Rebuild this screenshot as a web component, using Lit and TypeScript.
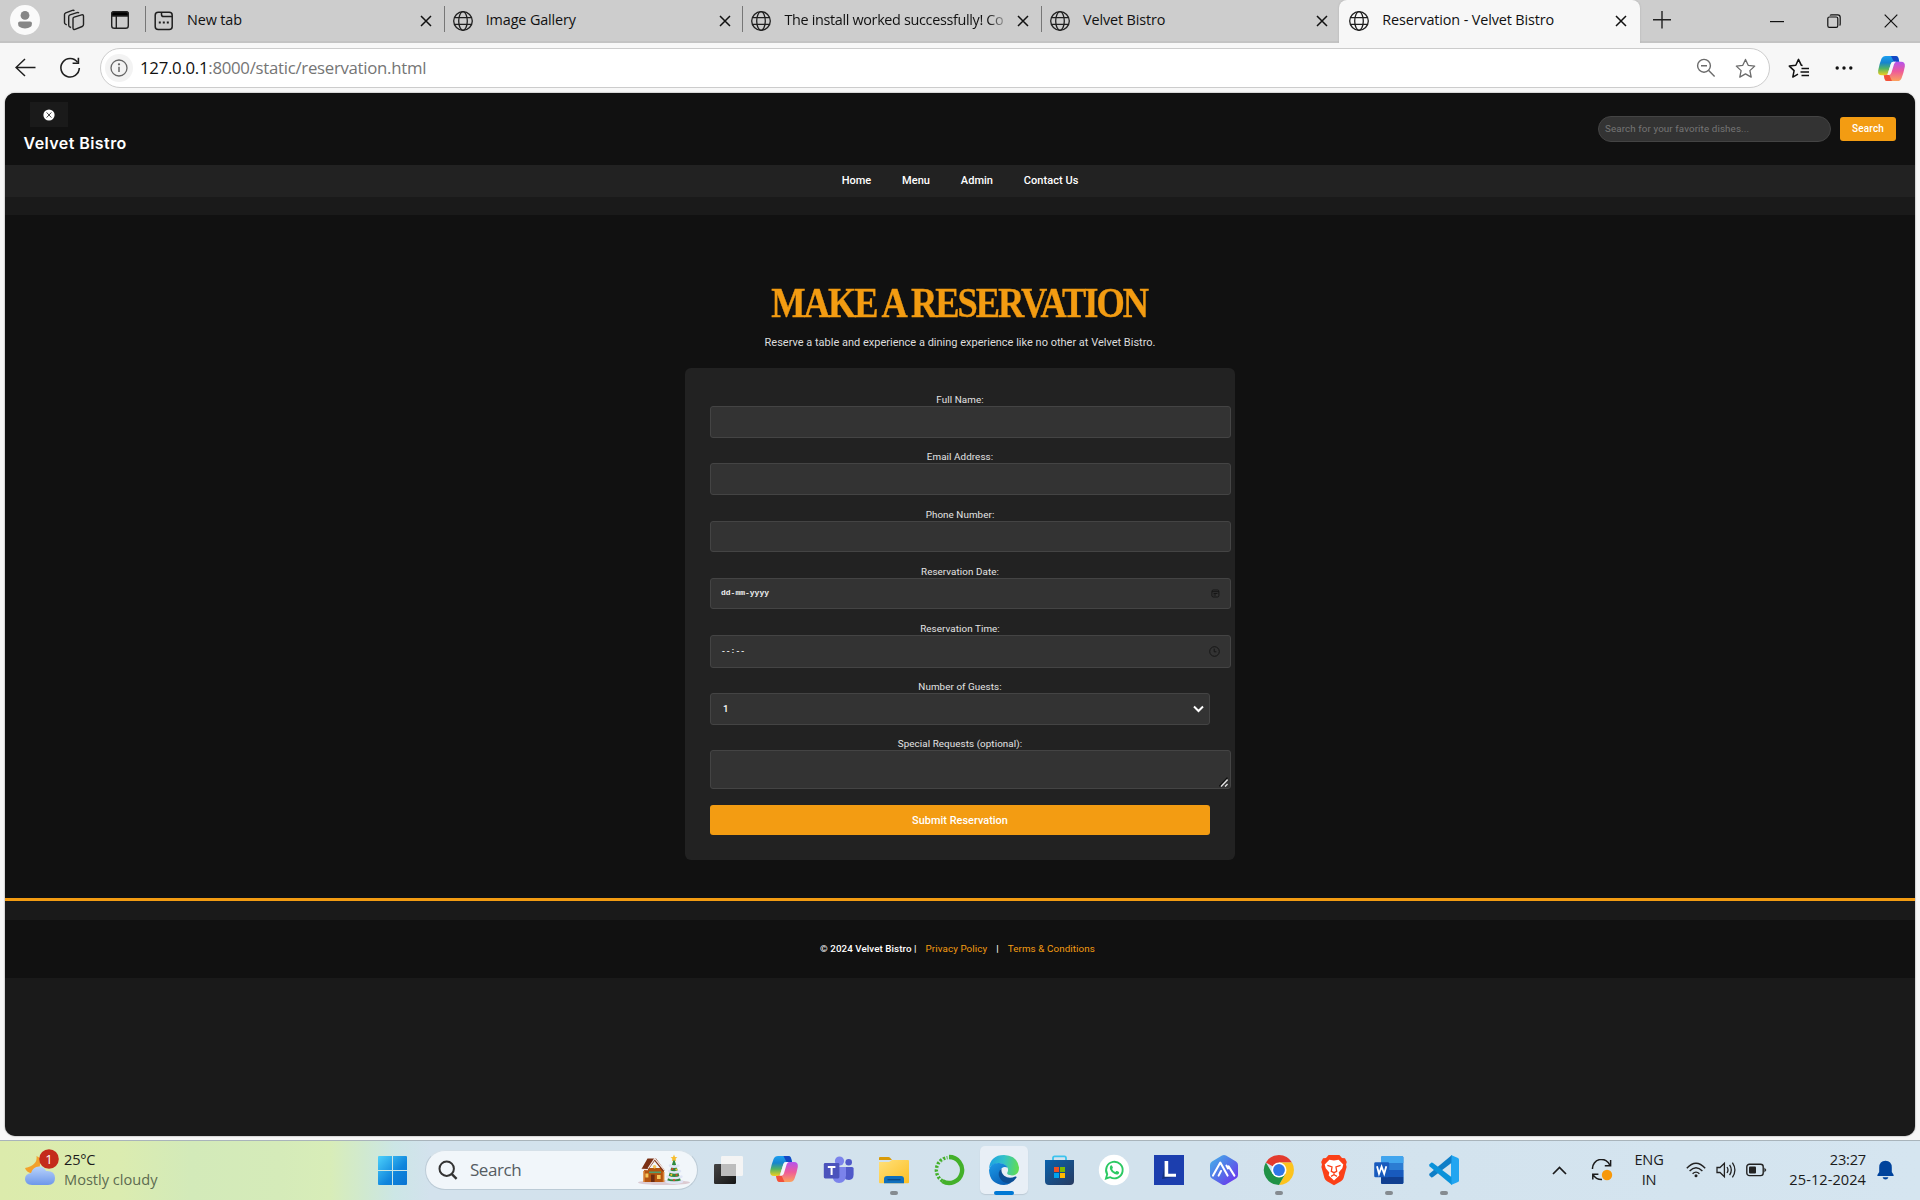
import { LitElement, html, svg, css, nothing } from "lit";
import { customElement } from "lit/decorators.js";

const uiFont = css`"Open Sans", "Noto Sans", sans-serif`;

const globe = html`<svg class="ico" width="22" height="22" viewBox="0 0 22 22" fill="none" stroke="#1f1f1f" stroke-width="1.3">
  <circle cx="11" cy="11" r="9.3"/><ellipse cx="11" cy="11" rx="4.3" ry="9.3"/><path d="M2.4 7.6H19.6M2.4 14.4H19.6"/></svg>`;

const newTabIcon = html`<svg class="ico" width="22" height="22" viewBox="0 0 22 22" fill="none" stroke="#1f1f1f" stroke-width="1.5">
  <rect x="2.2" y="2.2" width="17" height="17.4" rx="3"/><path d="M8.5 2.5V4.4Q8.5 6.6 10.7 6.6H19"/>
  <path d="M5.8 12.4h2M9.8 12.4h2M13.8 12.4h2" stroke-width="2"/></svg>`;

const closeIcon = html`<svg class="close" width="12" height="12" viewBox="0 0 12 12" stroke="#111" stroke-width="1.5"><path d="M1 1L11 11M11 1L1 11"/></svg>`;

const copilot = (id: string, w: number) => html`<svg width="${w}" height="${w}" viewBox="0 0 30 30">
  <defs>
    <linearGradient id="${id}a" x1="0" y1="0" x2="0" y2="1"><stop offset="0" stop-color="#1c9ff0"/><stop offset=".35" stop-color="#1684cf"/><stop offset=".65" stop-color="#52b264"/><stop offset="1" stop-color="#f2cf1d"/></linearGradient>
    <linearGradient id="${id}b" x1="0" y1="0" x2="0" y2="1"><stop offset="0" stop-color="#b453ee"/><stop offset=".5" stop-color="#ee5a9a"/><stop offset="1" stop-color="#fba35c"/></linearGradient>
  </defs>
  <path d="M12 2H19.5Q21.4 2 22 4L23 8H17Q15 8 14.4 10L11.3 20Q10.6 22 8.5 22H5Q.6 22 1.2 17Q2.4 10.5 4.6 5Q5.8 2 9 2Z" fill="url(#${id}a)"/>
  <path d="M14.5 2H19.5Q21.4 2 22 4L23 8H17.5Z" fill="#1347c4"/>
  <path d="M18 28H10.5Q8.6 28 8 26L7 22H8.5Q11 22 11.8 20L15 10Q15.8 8 18 8H25Q29.4 8 28.8 13Q27.6 19.5 25.4 25Q24.2 28 21 28Z" fill="url(#${id}b)"/>
  <path d="M15.5 28H10.5Q8.6 28 8 26L7 22H8.5Q11 22 11.8 20Z" fill="#f2503b"/>
  <path d="M17.6 10.5Q18.2 8.6 19.8 8H17Q15 8 14.4 10L11.3 20Q11 21.2 10.3 21.7H12.6Q14.3 21.4 14.9 19.5Z" fill="#f4f6fa"/>
</svg>`;

@customElement("browser-chrome")
export class BrowserChrome extends LitElement {
  static styles = css`
    :host { display: block; font-family: ${uiFont}; color: #111; }
    svg { display: block; flex: none; }
    .tabs { display: flex; height: 43px; background: #cdcdcd; box-shadow: inset 0 -2px 0 #c3c3c3; }
    .lead { display: flex; align-items: center; width: 145px; height: 40px; box-sizing: border-box; padding-left: 10px; }
    .avatar { width: 30px; height: 30px; margin-right: 23px; }
    .spaces { margin-right: 25px; }
    .tab { display: flex; align-items: center; box-sizing: border-box; width: 298.7px; height: 41px; padding-left: 7px; position: relative; font-size: 14.4px; letter-spacing: -.13px; }
    .tab::before { content: ""; width: 1px; height: 26px; background: #777; margin: 0 0 3px -7px; }
    .tab .ico { margin-left: 7px; }
    .title { width: 226px; margin-left: 12px; white-space: nowrap; line-height: 24px; height: 26px; }
    .title.fade { letter-spacing: -.33px; mask-image: linear-gradient(90deg, #000 204px, transparent 226px); }
    .close { margin-left: 7px; }
    .active { width: 300.5px; height: 43px; padding-bottom: 2px; background: #f7f7f7; border-radius: 8px 8px 0 0; box-shadow: 0 0 2px #aaa; margin-left: -.5px; clip-path: inset(0 -3px 0 -3px); }
    .active::before { visibility: hidden; }
    .active .ico { margin-left: 8px; }
    .plus { margin: 11px 0 0 13px; }
    .win { display: flex; align-items: center; height: 42px; margin-left: auto; gap: 43px; padding-right: 22px; }
    .bar { display: flex; align-items: center; height: 50px; background: #f7f7f7; }
    .back { margin-left: 15px; }
    .reload { margin-left: 23px; }
    .address { display: flex; align-items: center; box-sizing: border-box; width: 1670px; height: 40px; margin: 0 0 0 19px; background: #fff; border: 1.5px solid #ccc; border-radius: 20px; }
    .info { display: flex; align-items: center; justify-content: center; width: 28px; height: 28px; border-radius: 14px; background: #f3f3f3; margin-left: 4px; }
    .url { margin-left: 7px; font-size: 16.8px; letter-spacing: -.28px; line-height: 26px; color: #757575; white-space: nowrap; }
    .host { color: #111; }
    .zoom { margin-left: auto; }
    .star { margin: 0 13px 0 19px; }
    .fav { margin-left: 18px; }
    .dots { margin-left: 25px; }
    .pilot { margin-left: 24px; }
  `;

  private tabs = [
    { title: "New tab", icon: newTabIcon },
    { title: "Image Gallery", icon: globe },
    { title: "The install worked successfully! Co", icon: globe, fade: true },
    { title: "Velvet Bistro", icon: globe },
    { title: "Reservation - Velvet Bistro", icon: globe, active: true },
  ];

  render() {
    return html`
      <div class="tabs">
        <div class="lead">
          <svg class="avatar" viewBox="0 0 30 30"><circle cx="15" cy="15" r="15" fill="#fafafa"/><circle cx="15" cy="10.4" r="4.4" fill="#868686"/><path d="M8 18.6Q8 16.5 10 16.5H20Q22 16.5 22 18.6Q22 23.4 15 23.4Q8 23.4 8 18.6Z" fill="#868686"/></svg>
          <svg class="spaces" width="22" height="22" viewBox="0 0 22 22" fill="none" stroke="#222" stroke-width="1.4" stroke-linejoin="round">
            <path d="M10 9.8Q10 8.6 11.2 8.2L18.6 5.9Q20.4 5.5 20.5 7V15.6Q20.5 17 19.2 17.5L12 20.4Q10.2 20.9 10 19.2Z"/>
            <path d="M8 18.6L6.4 17.6Q5.7 17.1 5.7 16V7.8Q5.7 6.4 7 5.9L14 3.6Q15.4 3.3 15.9 4.2"/><path d="M3.7 16L2.3 15Q1.5 14.4 1.5 13.4V5.6Q1.5 4.3 2.7 3.8L9.4 1.4Q10.8 1 11.3 1.9"/></svg>
          <svg width="20" height="20" viewBox="0 0 20 20" fill="none" stroke="#222" stroke-width="1.4"><rect x="1.7" y="1.7" width="16.6" height="16.6" rx="2.6"/><path d="M1.7 6V4Q1.7 1.7 4 1.7H16Q18.3 1.7 18.3 4V6Z" fill="#000"/><path d="M6.3 6V18"/></svg>
        </div>
        ${this.tabs.map((t) => html`<div class="tab ${t.active ? "active" : ""}">${t.icon}<div class="title ${t.fade ? "fade" : ""}">${t.title}</div>${closeIcon}</div>`)}
        <svg class="plus" width="18" height="18" viewBox="0 0 18 18" stroke="#222" stroke-width="1.4"><path d="M9 0V17.5M0 8.7H18"/></svg>
        <div class="win">
          <svg width="14" height="14" viewBox="0 0 14 14" stroke="#111" stroke-width="1.2"><path d="M0 7.6H14"/></svg>
          <svg width="14" height="14" viewBox="0 0 14 14" fill="none" stroke="#111" stroke-width="1.2"><rect x=".8" y="3" width="10" height="10.3" rx="1.6"/><path d="M3 1.5Q3.5 .8 4.5 .8H10.7Q13.2 .8 13.2 3.4V10Q13.2 11 12.6 11.5"/></svg>
          <svg width="14" height="14" viewBox="0 0 14 14" stroke="#111" stroke-width="1.2"><path d="M.7 .7L13.3 13.3M13.3 .7L.7 13.3"/></svg>
        </div>
      </div>
      <div class="bar">
        <svg class="back" width="21" height="20" viewBox="0 0 21 20" fill="none" stroke="#1f1f1f" stroke-width="1.5"><path d="M20.5 9.5H1M10 1L1 9.5L10 18"/></svg>
        <svg class="reload" width="22" height="22" viewBox="0 0 22 22" fill="none" stroke="#1f1f1f" stroke-width="1.6"><path d="M18.6 5.4A9.2 9.2 0 1 0 20.3 11"/><path d="M19.4 .8V6.2H13.6"/></svg>
        <div class="address">
          <div class="info"><svg width="18" height="18" viewBox="0 0 18 18" fill="none" stroke="#666" stroke-width="1.3"><circle cx="9" cy="9" r="8"/><path d="M9 7.8V13" stroke-width="1.5"/><circle cx="9" cy="5.3" r=".5" fill="#666"/></svg></div>
          <div class="url"><span class="host">127.0.0.1</span>:8000/static/reservation.html</div>
          <svg class="zoom" width="20" height="20" viewBox="0 0 20 20" fill="none" stroke="#6b6b6b" stroke-width="1.4"><circle cx="8" cy="7.8" r="6.4"/><path d="M12.7 12.6L18.6 18.6M5 7.8H11"/></svg>
          <svg class="star" width="21" height="21" viewBox="0 0 21 21" fill="none" stroke="#6b6b6b" stroke-width="1.3" stroke-linejoin="round"><path d="M10.5 1.4L13.2 7.3L19.7 8.1L14.9 12.6L16.2 19.1L10.5 15.9L4.8 19.1L6.1 12.6L1.3 8.1L7.8 7.3Z"/></svg>
        </div>
        <svg class="fav" width="22" height="21" viewBox="0 0 22 21" fill="none" stroke="#111" stroke-width="1.5" stroke-linejoin="round"><path d="M14.6 7.6L13.4 7.3L10.5 1.4L7.8 7.3L1.3 8.1L6.1 12.6L4.8 19.1L10 16.2"/><path d="M13.5 10.6H21M12.5 14H21M13.5 17.4H21"/></svg>
        <svg class="dots" width="18" height="4" viewBox="0 0 18 4" fill="#111"><circle cx="2.2" cy="2" r="1.7"/><circle cx="9" cy="2" r="1.7"/><circle cx="15.8" cy="2" r="1.7"/></svg>
        <div class="pilot">${copilot("t", 29)}</div>
      </div>`;
  }
}

@customElement("bistro-page")
export class BistroPage extends LitElement {
  static styles = css`
    :host { display: block; height: 1043px; margin: 0 5px; background: #1a1a1a; border-radius: 10px; overflow: hidden; font-family: Roboto, sans-serif; color: #fff; box-shadow: 0 0 1.5px #555; }
    svg { display: block; flex: none; }
    .header { display: flex; justify-content: space-between; height: 72px; background: #111; padding: 0 19px 0 18.5px; }
    .thumb { display: flex; align-items: center; justify-content: center; width: 38px; height: 25px; margin: 9px 0 0 6px; background: #1a1a1a; }
    .brand { font: 600 16px/20px Inter, sans-serif; letter-spacing: .43px; margin-top: 5.5px; white-space: nowrap; }
    .search { display: flex; align-items: center; }
    .query { box-sizing: border-box; width: 233px; height: 26px; border: 1px solid #444; border-radius: 13px; background: #333; color: #757575; font-size: 9.8px; letter-spacing: .11px; line-height: 23px; padding-left: 6px; }
    .go { width: 56px; height: 24px; margin-left: 9px; border-radius: 3px; background: #f39c12; font-size: 10px; letter-spacing: .15px; font-weight: 500; line-height: 23px; text-align: center; }
    .nav { display: flex; justify-content: center; gap: 30.8px; height: 32px; background: #222; font-size: 11px; letter-spacing: .04px; font-weight: 500; line-height: 31px; }
    .main { display: flex; flex-direction: column; align-items: center; box-sizing: border-box; height: 686px; margin-top: 18px; padding-top: 67px; background: #111; border-bottom: 3px solid #f39c12; }
    h1 { font: bold 41.5px/42px "Liberation Serif", serif; letter-spacing: -2.3px; color: #f39c12; margin: 0 2px 0 0; white-space: nowrap; transform: scaleX(.877); -webkit-text-stroke: .4px #f39c12; }
    .sub { margin-top: 11.6px; font-size: 11px; line-height: 14px; height: 13.4px; color: #ddd; white-space: nowrap; }
    .card { display: grid; grid-template-columns: 500px; grid-template-rows: 57px 58px 57px 57px 58px 57px 68px 30px; box-sizing: border-box; width: 550px; height: 492px; margin-top: 19px; padding: 25px; border-radius: 6px; background: #222; }
    .label { height: 13px; font-size: 9.8px; letter-spacing: .09px; line-height: 14px; text-align: center; color: #e4e4e4; }
    .input { display: flex; align-items: center; justify-content: space-between; box-sizing: border-box; width: 521px; height: 32px; padding: 0 10px; border: 1px solid #444; border-radius: 3px; background: #333; }
    .short { height: 31px; }
    .tall { height: 33px; }
    .area { height: 39px; align-items: flex-end; justify-content: flex-end; padding: 0 2px 1px; }
    .select { width: 500px; padding: 0 5px 0 12px; font-size: 9.6px; font-weight: 500; }
    .mono { font: bold 8px/12px "Liberation Mono", monospace; color: #eee; }
    .submit { height: 30px; border-radius: 3px; background: #f39c12; font-size: 10.9px; letter-spacing: .03px; font-weight: 500; line-height: 31px; text-align: center; }
    .footer { display: flex; align-items: center; height: 56px; padding-bottom: 2px; margin-top: 19px; padding-left: 815px; background: #111; font-size: 9.8px; letter-spacing: .06px; font-weight: 500; white-space: nowrap; }
    .link { color: #f39c12; margin: 0 9px; font-weight: 400; letter-spacing: .1px; }
  `;

  private field(label: string, cls = "", inner: unknown = nothing) {
    return html`<div><div class="label">${label}</div><div class="input ${cls}">${inner}</div></div>`;
  }

  render() {
    return html`
      <div class="header">
        <div><div class="thumb"><svg width="12" height="12" viewBox="0 0 12 12"><circle cx="6" cy="6" r="5.6" fill="#fff"/><path d="M3.6 3.4L8.4 8.6M8.4 3.4L3.6 8.6" stroke="#444" stroke-width="1"/></svg></div>
          <div class="brand">Velvet Bistro</div></div>
        <div class="search"><div class="query">Search for your favorite dishes...</div><div class="go">Search</div></div>
      </div>
      <div class="nav"><span>Home</span><span>Menu</span><span>Admin</span><span>Contact Us</span></div>
      <div class="main">
        <h1>MAKE A RESERVATION</h1>
        <div class="sub">Reserve a table and experience a dining experience like no other at Velvet Bistro.</div>
        <div class="card">
          ${this.field("Full Name:")}
          ${this.field("Email Address:")}
          ${this.field("Phone Number:", "short")}
          ${this.field("Reservation Date:", "short", html`<span class="mono">dd-mm-yyyy</span><svg width="9" height="9" viewBox="0 0 9 9" fill="none" stroke="#161616"><rect x=".9" y="1" width="7" height="7" rx="1.4"/><path d="M1 2.7H8M2.5 4.5H6.5M2.5 6H5"/></svg>`)}
          ${this.field("Reservation Time:", "tall", html`<span class="mono">--:--</span><svg width="11" height="11" viewBox="0 0 11 11" fill="none" stroke="#161616"><circle cx="5.5" cy="5.5" r="4.8"/><path d="M5.2 2.6V5.8H7.4"/></svg>`)}
          ${this.field("Number of Guests:", "select", html`<span>1</span><svg width="11" height="8" viewBox="0 0 11 8" fill="none" stroke="#fff" stroke-width="2"><path d="M1 1.5L5.5 6L10 1.5"/></svg>`)}
          ${this.field("Special Requests (optional):", "area", html`<svg width="9" height="10" viewBox="0 0 9 10"><path d="M.4 9.4L8.4 .6" stroke="#0c0c0c" stroke-width="1.3"/><path d="M2 9.6L8.6 2.6M6 9.6L8.6 7" stroke="#ddd" stroke-width="1.4"/></svg>`)}
          <div class="submit">Submit Reservation</div>
        </div>
      </div>
      <div class="footer"><span>© 2024 Velvet Bistro |</span><span class="link">Privacy Policy</span><span>|</span><span class="link">Terms &amp; Conditions</span></div>`;
  }
}

const apps: { icon: unknown; mark?: string }[] = [
  { icon: svg`<defs><linearGradient id="tv" x1="0" y1="0" x2="1" y2="1"><stop stop-color="#444"/><stop offset="1" stop-color="#161616"/></linearGradient></defs><rect x="1" y="10" width="22" height="20" rx="1.2" fill="url(#tv)"/><rect x="8" y="2" width="22" height="20" rx="1.2" fill="#f4f4f4"/><rect x="8" y="10" width="15" height="12" fill="#bdbdbd"/>` },
  { icon: "copilot" },
  { icon: svg`<circle cx="16.5" cy="7" r="4.6" fill="#7b83eb"/><circle cx="25.7" cy="8.3" r="3.3" fill="#5059c9"/><path d="M21 13H29Q30.6 13 30.6 14.6V20.4Q30.6 25.6 26 26Q22.4 26 21 23.4Z" fill="#5059c9"/><path d="M9.5 13H23V21.5Q22.5 29 16 29Q10 29 9.5 22Z" fill="#7b83eb"/><rect x=".8" y="9" width="15.6" height="15.4" rx="1.4" fill="#4b53bc"/><path d="M4.8 13H12.4M8.6 13V21" stroke="#fff" stroke-width="2"/>` },
  { icon: svg`<defs><linearGradient id="fo" x1="0" y1="0" x2="1" y2="1"><stop stop-color="#ffe07a"/><stop offset="1" stop-color="#fcbf24"/></linearGradient></defs><path d="M1 4Q1 3 2 3H10.5Q11.5 3 12.3 4L14 6H1Z" fill="#d99a08"/><path d="M1 8H11L14 6H30Q31 6 31 7V28.2Q31 29.3 30 29.3H2Q1 29.3 1 28.2Z" fill="url(#fo)"/><path d="M6 29.3V25Q6 22 9 22H23Q26 22 26 25V29.3Z" fill="#0f6fbd"/><path d="M9.5 25.7H22.5" stroke="#0a4a87" stroke-width="1.4"/>`, mark: "on" },
  { icon: svg`<path d="M16 3A13 13 0 1 1 9.5 27.2" fill="none" stroke="#43b02a" stroke-width="4.4"/><path d="M9.6 27A12.6 12.6 0 0 1 14.5 3.6" fill="none" stroke="#43b02a" stroke-width="3.4" stroke-dasharray="2.4 1.4"/><path d="M7.6 25.5A13.2 13.2 0 0 1 12 4.6" fill="none" stroke="#d3e2ed" stroke-width="1" stroke-dasharray="1.6 2"/>` },
  { icon: svg`<defs><linearGradient id="ea" x1="0" y1=".2" x2="1" y2=".3"><stop stop-color="#1ca0e4"/><stop offset=".5" stop-color="#33c2c8"/><stop offset="1" stop-color="#5fdd54"/></linearGradient><linearGradient id="eb" x1="0" y1="0" x2=".6" y2="1"><stop stop-color="#1d9be8"/><stop offset="1" stop-color="#0a62b8"/></linearGradient></defs>
    <path d="M1 14.5Q2.4 1 16 1Q29.4 1.6 31 13.5Q31 21 24 21.4Q18.4 21.3 19.3 18.7Q20.7 16.5 19.6 13.8Q17.6 9.7 11.5 9.2Q4.4 9.4 1 14.5Z" fill="url(#ea)"/>
    <path d="M1 16Q2.8 8.6 11.2 9Q17.7 9.4 19.6 13.8Q16.6 11.8 13.6 14.3Q10.4 17.8 12.6 22.6Q15.3 28.4 22.6 29Q19.6 31 16 31Q1.6 30.4 1 16Z" fill="url(#eb)"/><path d="M13 14.9Q9.4 18 11.4 23.2Q14.6 30 22.3 29Q26.4 27 28.6 23.4Q28.6 22 27.2 22.6Q21 25.4 16.2 21.8Q12.6 18.5 13.6 14.3Z" fill="#0c4f95"/>`, mark: "sel" },
  { icon: svg`<defs><linearGradient id="st" x1="0" y1="0" x2="1" y2="1"><stop stop-color="#0a62ac"/><stop offset="1" stop-color="#273a60"/></linearGradient></defs><path d="M10 7V4Q10 2.4 11.6 2.4H21.4Q23 2.4 23 4V7" fill="none" stroke="#3cc3ee" stroke-width="1.8"/><path d="M2 6H31V27Q31 31 27 31H6Q2 31 2 27Z" fill="url(#st)"/><path d="M11 13H16V18H11Z" fill="#f25022"/><path d="M17 13H22V18H17Z" fill="#7fba00"/><path d="M11 19H16V24H11Z" fill="#00a4ef"/><path d="M17 19H22V24H17Z" fill="#ffb900"/>` },
  { icon: svg`<circle cx="16" cy="16" r="15.2" fill="#fff"/><path d="M8 24.5L9.2 20.2A8.3 8.3 0 1 1 12.2 23.2Z" fill="none" stroke="#2bc962" stroke-width="1.9"/><path d="M12.6 11.6Q13.6 10.9 14.2 12L14.9 13.6Q14.9 14.3 14.1 15Q15.2 17.3 17.4 18.1L18.4 17.1Q18.9 16.7 19.7 17.2L21 17.9Q21.4 18.6 20.7 19.7Q19.2 21.2 16.7 20.1Q13.3 18.6 12 15.2Q11.4 12.8 12.6 11.6Z" fill="#2bc962"/>` },
  { icon: svg`<rect x="1" y="1" width="30" height="30" fill="#1c3eae"/><path d="M9 25L12 8V20.4H23L20 23Z" fill="#12307f"/><path d="M11.6 7H15.2V19.7H23V22.7H11.6Z" fill="#fff"/>` },
  { icon: svg`<defs><linearGradient id="hx" x1="0" y1="0" x2="1" y2="1"><stop stop-color="#43b4ea"/><stop offset=".5" stop-color="#5472e8"/><stop offset="1" stop-color="#7228f0"/></linearGradient></defs><path d="M16 1Q17 1 18 1.6L28 7.4Q30 8.6 30 11V21Q30 23.4 28 24.6L18 30.4Q16 31.6 14 30.4L4 24.6Q2 23.4 2 21V11Q2 8.6 4 7.4L14 1.6Q15 1 16 1Z" fill="url(#hx)"/><path d="M5 21.6L12.3 8.6L19.6 21.6M10.6 21.6L13 17M18.4 11.6L20 14.4M20.6 12.4L26.4 21.6" fill="none" stroke="#fff" stroke-width="2" stroke-linecap="round" stroke-linejoin="round"/>` },
  { icon: svg`<path d="M16 16L2.9 8.5A15 15 0 0 1 29 8.6H16Z" fill="#e33b2e"/><path d="M16 16L22.4 19.8L16 31A15 15 0 0 0 29 8.6H16Z" fill="#fcc31e"/><path d="M16 16L9.6 19.8L2.9 8.5A15 15 0 0 0 16 31L22.4 19.8Z" fill="#1f9246"/><circle cx="16" cy="16" r="7.5" fill="#fff"/><circle cx="16" cy="16" r="5.9" fill="#2f76e8"/>`, mark: "on" },
  { icon: svg`<path d="M10.6 1H21.4L24 4L27 4.3L28.8 8L28 10.6L28.6 13L25.6 24Q25 26 23 27.3L16 31.2L9 27.3Q7 26 6.4 24L3.4 13L4 10.6L3.2 8L5 4.3L8 4Z" fill="#fb4018"/><path d="M16 6.4L20.6 5.7L25.3 10.6L24.3 14.3L20.7 18.6L21.3 21.4L16 26.6L10.7 21.4L11.3 18.6L7.7 14.3L6.7 10.6L11.4 5.7Z" fill="#fff"/><path d="M9.4 11.4L14 13L13.3 17.3L16 18.7L18.7 17.3L18 13L22.6 11.4M16 18.7V20.6M13 22.4L16 20.8L19 22.4" fill="none" stroke="#fb4018" stroke-width="1.3"/>` },
  { icon: svg`<rect x="8" y="2" width="22.4" height="28" rx="1.6" fill="#2b7cd3"/><path d="M8 9V3.6Q8 2 9.6 2H28.8Q30.4 2 30.4 3.6V9Z" fill="#41a5ee"/><rect x="8" y="16" width="22.4" height="7" fill="#185abd"/><path d="M8 23H30.4V28.4Q30.4 30 28.8 30H9.6Q8 30 8 28.4Z" fill="#103f91"/><rect x="1.2" y="8.3" width="15" height="15" rx="1.4" fill="#185abd"/><path d="M4 12.2L6 19.7L8.6 12.6L11.2 19.7L13.3 12.2" fill="none" stroke="#fff" stroke-width="1.8"/>`, mark: "on" },
  { icon: svg`<path d="M23 1L30 4Q31 4.6 31 5.6V26.4Q31 27.4 30 28L23 31Z" fill="#22a5f1"/><path d="M23.6 1.2L1.7 19.6Q.6 20.6 1.6 21.8L3.2 23.2Q4 23.7 5 23L23.4 9Z" fill="#0f7ec7"/><path d="M23.6 30.8L1.7 12.4Q.6 11.4 1.6 10.2L3.2 8.8Q4 8.3 5 9L23.4 23Z" fill="#0a92da"/>`, mark: "on" },
];

@customElement("task-bar")
export class TaskBar extends LitElement {
  static styles = css`
    :host { display: flex; height: 60px; box-sizing: border-box; border-top: 1px solid #a9b4bb; font-family: ${uiFont}; color: #1b1b1b; font-size: 14.6px; margin-top: 4px;
      background: linear-gradient(90deg, #dcebac 0, #dbecb0 120px, #d3eab9 190px, #d5ebb9 280px, #d8edb8 330px, #d0e9d0 365px, #cce6e6 395px, #d3e2ed 430px, #d2e2ed 1200px, #d5e5f0 1920px); }
    svg { display: block; flex: none; }
    .weather { display: flex; align-items: center; width: 378px; height: 58px; }
    .sky { margin: 0 5px 6px 24px; }
    .stack { line-height: 20px; height: 42px; white-space: nowrap; letter-spacing: -.2px; }
    .dim { color: #5d6b50; letter-spacing: 0; }
    .start { margin: 15px 18px 0 0; }
    .pill { display: flex; align-items: center; box-sizing: border-box; width: 273px; height: 40px; margin-top: 9px; border: 1px solid #bccbd6; border-top-color: #d5e0e8; border-radius: 20px; background: #f1f6fa; }
    .lens { margin-left: 12px; }
    .hint { margin-left: 12px; font-size: 17px; letter-spacing: -.45px; color: #555c62; line-height: 30px; }
    .pic { margin-left: auto; margin-right: 7px; }
    .apps { display: flex; gap: 7px; margin: 5px 0 0 7px; }
    .app { display: grid; grid-template-rows: 45px 4px; justify-items: center; width: 48px; height: 48px; border-radius: 5px; box-sizing: border-box; }
    .glyph { align-self: start; margin-top: 8px; }
    .dot { width: 8px; height: 4px; border-radius: 2px; background: #858b90; }
    .sel { background: #e8eff6; box-shadow: 0 1px 1px #bccad5; }
    .sel .dot { width: 20px; background: #0078d4; }
    .tray { display: flex; align-items: center; height: 58px; margin-left: auto; }
    .up { margin-right: 24px; }
    .lang { width: 60px; margin-left: 6px; text-align: center; }
    .wifi { margin-left: 7px; }
    .vol { margin-left: 10px; }
    .bat { margin-left: 9px; }
    .time { width: 90px; margin-left: 9px; text-align: right; }
    .date { letter-spacing: .05px; }
    .bell { margin: 0 26px 0 11px; }
  `;

  render() {
    return html`
      <div class="weather">
        <svg class="sky" width="35" height="38" viewBox="0 0 35 38">
          <defs><linearGradient id="cl" x1="0" y1="0" x2="0" y2="1"><stop stop-color="#b9d3fb"/><stop offset="1" stop-color="#6d97ea"/></linearGradient></defs>
          <path d="M12.5 8Q14 17 1 20Q3 26 10 25Q18 22 16 10Z" fill="#f2a12b"/>
          <path d="M8 37Q1 36.5 1 31Q1 26 7 25Q9 18.5 15 18.5Q20 18.5 22 23Q31 22.5 31 30Q31 37 24 37Z" fill="url(#cl)"/>
          <circle cx="25" cy="11" r="9.8" fill="#c42b1c"/><text x="25" y="15.6" font-size="13" fill="#fff" text-anchor="middle" font-family="Open Sans">1</text>
        </svg>
        <div class="stack"><div>25°C</div><div class="dim">Mostly cloudy</div></div>
      </div>
      <svg class="start" width="29" height="29" viewBox="0 0 29 29"><defs><linearGradient id="ws" x1="0" y1="0" x2="29" y2="29" gradientUnits="userSpaceOnUse"><stop stop-color="#4cd0fb"/><stop offset=".6" stop-color="#0f85dc"/><stop offset="1" stop-color="#0a74d2"/></linearGradient></defs><path fill="url(#ws)" d="M1 0H14V14H0V1Q0 0 1 0ZM15 0H28Q29 0 29 1V14H15ZM0 15H14V29H1Q0 29 0 28ZM15 15H29V28Q29 29 28 29H15Z"/></svg>
      <div class="pill">
        <svg class="lens" width="20" height="20" viewBox="0 0 20 20" fill="none" stroke="#333" stroke-width="2"><circle cx="8.7" cy="8.7" r="7.2"/><path d="M13.6 13.8L18.6 18.8" stroke-width="2.4"/></svg>
        <span class="hint">Search</span>
        <svg class="pic" width="54" height="32" viewBox="0 0 54 32">
          <ellipse cx="28" cy="28.5" rx="26" ry="2.6" fill="#dccbd2"/>
          <path d="M8 14H28V28H8Z" fill="#b4540f"/><path d="M5.5 15L11.5 4.5H20L29 16.5L26.5 17L18.6 7L12 16Z" fill="#7a2f13"/><path d="M6 15.4L12 15.6M28.7 16.5L18.7 4.6L12 14.5" stroke="#f3e7e2" stroke-width="1.2" fill="none"/>
          <path d="M13 18.3H25" stroke="#4fa070" stroke-width="1.6"/><rect x="15" y="20.6" width="3.6" height="7.4" fill="#6e2b10"/><rect x="21" y="21" width="3.6" height="4" fill="#f5c65b"/><rect x="9.4" y="19.5" width="3" height="4" fill="#f5c65b"/><circle cx="18.6" cy="12.8" r="1.8" fill="#f5c65b"/><path d="M8 17V28M27.6 18V28" stroke="#d98336" stroke-width="1.6"/>
          <path d="M38 4L45 27.5H31Z" fill="#2f8a3d"/><path d="M34 11.5Q38 13.8 42.4 11.5M33 17Q38 20 44 17M31.4 22.6Q38 26 45.4 22.6M30.5 27.4Q38 30 46 27.4" stroke="#dfe5f5" stroke-width="2.6" fill="none" stroke-linecap="round"/>
          <path d="M38 .6L39 3L41.4 3.2L39.6 4.8L40.2 7.2L38 5.9L35.8 7.2L36.4 4.8L34.6 3.2L37 3Z" fill="#f7bd2e"/>
          <circle cx="36.3" cy="15" r="1.1" fill="#e0402c"/><circle cx="40.3" cy="15.4" r="1" fill="#f4c130"/><circle cx="35.3" cy="20.8" r="1.1" fill="#f4c130"/><circle cx="40.6" cy="21" r="1.1" fill="#e0402c"/><circle cx="38" cy="26" r="1.1" fill="#e0402c"/>
        </svg>
      </div>
      <div class="apps">
        ${apps.map((a) => html`<div class="app ${a.mark === "sel" ? "sel" : ""}"><div class="glyph">${a.icon === "copilot" ? copilot("b", 30) : html`<svg width="32" height="32" viewBox="0 0 32 32">${a.icon}</svg>`}</div>${a.mark ? html`<div class="dot"></div>` : nothing}</div>`)}
      </div>
      <div class="tray">
        <svg class="up" width="15" height="9" viewBox="0 0 15 9" fill="none" stroke="#1b1b1b" stroke-width="1.7"><path d="M1 8L7.5 1.5L14 8"/></svg>
        <svg width="22" height="22" viewBox="0 0 22 22" fill="none" stroke="#1b1b1b" stroke-width="1.5"><path d="M1.5 10A9 9 0 0 1 19 6.5M19.6 1V6.8H13.8M1.8 20.6V15.2H7.4M2 15.6Q5 20.8 11 20.6"/><circle cx="16" cy="16" r="5.2" fill="#f7980b" stroke="none"/></svg>
        <div class="stack lang"><div>ENG</div><div>IN</div></div>
        <svg class="wifi" width="20" height="16" viewBox="0 0 20 16" fill="none" stroke="#222" stroke-width="1.4"><path d="M.8 6.2Q10-3.6 19.2 6.2M3.6 9Q10 2.4 16.4 9M6.6 11.8Q10 8.4 13.4 11.8"/><circle cx="10" cy="13.7" r="1.5" fill="#222" stroke="none"/></svg>
        <svg class="vol" width="21" height="18" viewBox="0 0 21 18" fill="none" stroke="#222" stroke-width="1.3"><path d="M1 6.5H4L8.4 2.3V15.7L4 11.5H1Z"/><path d="M11 6Q13 9 11 12M13.6 3.8Q17 9 13.6 14.2M16.4 1.6Q21.4 9 16.4 16.4"/></svg>
        <svg class="bat" width="21" height="14" viewBox="0 0 21 14" fill="none" stroke="#222" stroke-width="1.4"><rect x=".8" y="1.2" width="16.4" height="11.4" rx="2.6"/><rect x="3" y="3.4" width="7" height="7" rx="1" fill="#222" stroke="none"/><path d="M18.4 4.4L20.4 6.9L18.4 9.4Z" fill="#222" stroke="none"/></svg>
        <div class="stack time"><div>23:27</div><div class="date">25-12-2024</div></div>
        <svg class="bell" width="17" height="20" viewBox="0 0 17 20" fill="#00439c"><path d="M8.5 .8Q14.6 1 14.8 7.4V12L16.8 15.2Q16.8 16 16 16H1Q.2 16 .2 15.2L2.2 12V7.4Q2.4 1 8.5 .8ZM5.6 17.2H11.4Q10.8 19.6 8.5 19.6Q6.2 19.6 5.6 17.2Z"/></svg>
      </div>`;
  }
}

@customElement("app-root")
export class AppRoot extends LitElement {
  static styles = css`
    :host { display: block; width: 1920px; height: 1200px; overflow: hidden; background: #f7f7f7; }
  `;

  render() {
    return html`<browser-chrome></browser-chrome><bistro-page></bistro-page><task-bar></task-bar>`;
  }
}
